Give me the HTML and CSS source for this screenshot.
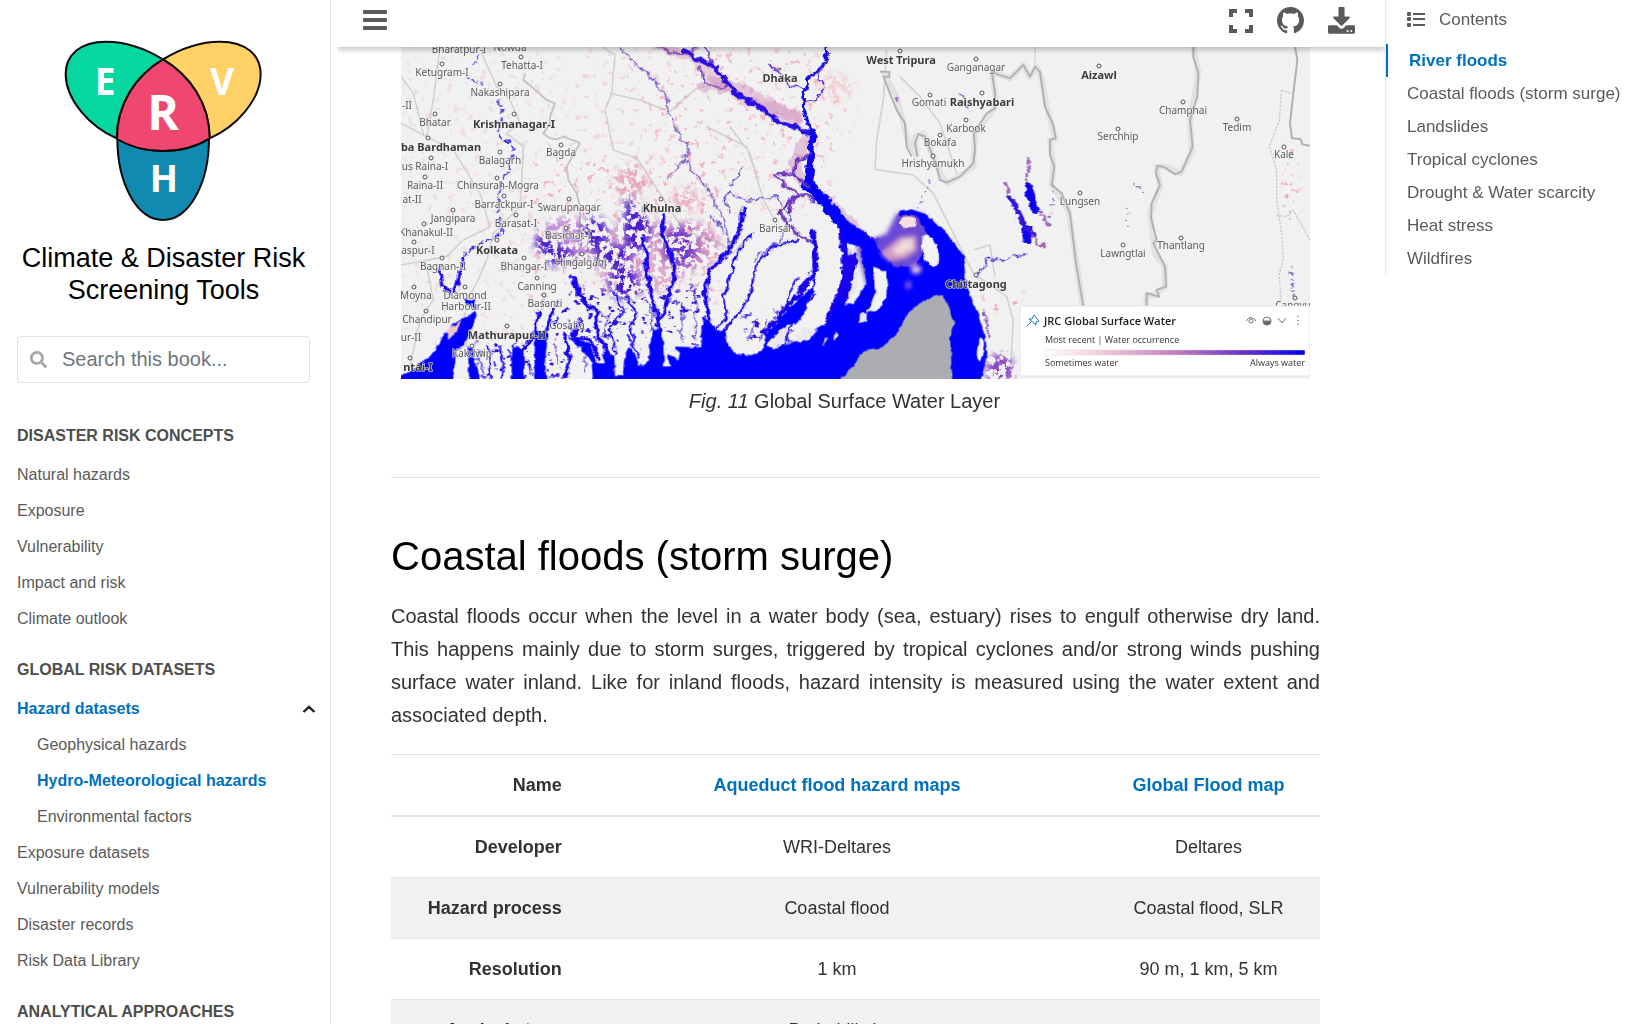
FILE: index.html
```html
<!DOCTYPE html>
<html lang="en">
<head>
<meta charset="utf-8">
<meta name="viewport" content="width=device-width, initial-scale=1">
<title>Hydro-Meteorological hazards</title>
<link rel="stylesheet" href="styles.css">
</head>
<body>
<div class="layout">
  <aside class="sidebar">
    <div class="brand">
      <svg class="logo" viewBox="64 39 200 184" role="img" aria-label="Risk logo">
        <g transform="scale(.33333)" stroke="#0a0a0a" stroke-width="6" stroke-linejoin="round">
          <path fill="#06d6a0" d="M489 178C430 142 370 125 318 125C240 125 197 165 197 222C197 300 270 380 350 415C350 310 410 225 489 178Z"/>
          <path fill="#ffd166" d="M489 178C548 142 608 125 660 125C738 125 782 165 782 222C782 300 708 380 629 415C629 310 568 225 489 178Z"/>
          <path fill="#118ab2" d="M352 415C352 550 410 660 489 660C568 660 627 550 627 415C550 465 430 465 352 415Z"/>
          <path fill="#ef476f" d="M489 178C410 225 350 310 351 417C430 465 550 465 629 415C629 310 568 225 489 178Z"/>
        </g>
        <g class="logo-letters">
          <text x="105" y="95">E</text>
          <text x="222" y="95">V</text>
          <text class="logo-main" x="163" y="130">R</text>
          <text x="164" y="192">H</text>
        </g>
      </svg>
      <h1 class="site-title">Climate &amp; Disaster Risk Screening Tools</h1>
      <form class="search">
        <svg class="search-icon" viewBox="0 0 512 512" aria-hidden="true"><path fill="currentColor" d="M505 442.700L405.300 343c-4.500-4.500-10.600-7-17-7H372c27.600-35.300 44-79.700 44-128C416 93.100 322.900 0 208 0S0 93.100 0 208s93.100 208 208 208c48.300 0 92.700-16.400 128-44v16.300c0 6.400 2.500 12.500 7 17l99.700 99.700c9.400 9.400 24.600 9.400 33.900 0l28.300-28.300c9.400-9.400 9.400-24.600.1-34zM208 336c-70.700 0-128-57.200-128-128 0-70.700 57.200-128 128-128 70.700 0 128 57.200 128 128 0 70.700-57.200 128-128 128z"/></svg>
        <input class="search-input" type="search" placeholder="Search this book..." aria-label="Search this book">
      </form>
    </div>
    <nav class="book-nav" aria-label="Book">
      <h2 class="part">DISASTER RISK CONCEPTS</h2>
      <ul class="pages">
        <li><a href="#">Natural hazards</a></li>
        <li><a href="#">Exposure</a></li>
        <li><a href="#">Vulnerability</a></li>
        <li><a href="#">Impact and risk</a></li>
        <li><a href="#">Climate outlook</a></li>
      </ul>
      <h2 class="part">GLOBAL RISK DATASETS</h2>
      <ul class="pages">
        <li>
          <div class="branch">
            <a class="current" href="#">Hazard datasets</a>
            <button class="toggle" type="button" aria-label="Collapse Hazard datasets"><svg viewBox="0 0 14 8" aria-hidden="true"><path d="M1.500 7L7 1.800L12.500 7" fill="none" stroke="currentColor" stroke-width="2.400"/></svg></button>
          </div>
          <ul class="pages nested">
            <li><a href="#">Geophysical hazards</a></li>
            <li><a class="current" href="#">Hydro-Meteorological hazards</a></li>
            <li><a href="#">Environmental factors</a></li>
          </ul>
        </li>
        <li><a href="#">Exposure datasets</a></li>
        <li><a href="#">Vulnerability models</a></li>
        <li><a href="#">Disaster records</a></li>
        <li><a href="#">Risk Data Library</a></li>
      </ul>
      <h2 class="part">ANALYTICAL APPROACHES</h2>
    </nav>
  </aside>

  <main class="main">
    <header class="topbar">
      <button class="icon-button" type="button" aria-label="Toggle sidebar"><svg viewBox="0 0 24 24" aria-hidden="true"><g fill="currentColor"><rect y="1" width="24" height="4" rx="1"/><rect y="9" width="24" height="4" rx="1"/><rect y="17" width="24" height="4" rx="1"/></g></svg></button>
      <div class="actions">
        <button class="icon-button" type="button" aria-label="Fullscreen"><svg viewBox="0 0 24 24" aria-hidden="true"><path d="M2 8V2H8M16 2H22V8M22 16V22H16M8 22H2V16" fill="none" stroke="currentColor" stroke-width="4"/></svg></button>
        <a class="icon-button" href="#" aria-label="Source repository"><svg class="wide" viewBox="0 0 16 16" aria-hidden="true"><path fill="currentColor" d="M8 0C3.580 0 0 3.580 0 8c0 3.540 2.290 6.530 5.470 7.590.4.070.55-.170.55-.380 0-.190-.010-.820-.010-1.490-2.010.370-2.530-.490-2.690-.940-.090-.230-.480-.940-.820-1.130-.280-.150-.680-.520-.010-.530.630-.010 1.080.580 1.230.820.720 1.210 1.870.870 2.330.660.070-.520.280-.870.510-1.070-1.780-.200-3.640-.890-3.640-3.950 0-.870.310-1.590.820-2.150-.080-.200-.360-1.020.080-2.120 0 0 .670-.210 2.200.820.640-.180 1.320-.270 2-.270s1.360.090 2 .270c1.530-1.040 2.200-.820 2.200-.820.440 1.100.160 1.920.080 2.120.510.560.820 1.270.820 2.150 0 3.070-1.870 3.750-3.650 3.950.290.250.540.730.540 1.480 0 1.070-.010 1.930-.010 2.200 0 .210.150.460.550.380A8.010 8.010 0 0 0 16 8c0-4.420-3.580-8-8-8z"/></svg></a>
        <button class="icon-button" type="button" aria-label="Download"><svg class="wide" viewBox="0 0 80 80" aria-hidden="true"><g fill="currentColor"><path d="M33 0H47Q49 0 49 2V28H62Q67 29 64 33L43 54Q40 57 37 54L16 33Q13 29 18 28H31V2Q31 0 33 0Z"/><path d="M4 54H26L34 62Q40 67 46 62L54 54H76Q80 54 80 58V75Q80 79 76 79H4Q0 79 0 75V58Q0 54 4 54ZM58 68a3 3 0 1 0 0 6a3 3 0 0 0 0-6ZM69 68a3 3 0 1 0 0 6a3 3 0 0 0 0-6Z" fill-rule="evenodd"/></g></svg></button>
      </div>
    </header>

    <article class="content">
      <figure class="figure">
        <svg class="map" viewBox="401 47 909 332" role="img" aria-label="Map of surface water in the Ganges delta">
          <defs>
            <filter id="rough" x="-5%" y="-5%" width="110%" height="110%"><feTurbulence type="fractalNoise" baseFrequency=".04" numOctaves="3" seed="4"/><feDisplacementMap in="SourceGraphic" scale="26" xChannelSelector="R" yChannelSelector="G"/></filter>
            <filter id="coast" x="-5%" y="-5%" width="110%" height="110%"><feTurbulence type="fractalNoise" baseFrequency=".05" numOctaves="2" seed="9"/><feDisplacementMap in="SourceGraphic" scale="14" xChannelSelector="R" yChannelSelector="G"/></filter>
            <filter id="dense" x="-10%" y="-10%" width="120%" height="120%"><feGaussianBlur in="SourceGraphic" stdDeviation="12" result="b"/><feTurbulence type="fractalNoise" baseFrequency=".055" numOctaves="5" seed="3"/><feColorMatrix values="0 0 0 0 0  0 0 0 0 0  0 0 0 0 0  9 0 0 0 -4"/><feComposite in="b" operator="in"/></filter>
            <filter id="sparse" x="-10%" y="-10%" width="120%" height="120%"><feGaussianBlur in="SourceGraphic" stdDeviation="10" result="b"/><feTurbulence type="fractalNoise" baseFrequency=".05" numOctaves="4" seed="12"/><feColorMatrix values="0 0 0 0 0  0 0 0 0 0  0 0 0 0 0  14 0 0 0 -9"/><feComposite in="b" operator="in"/></filter>
            <filter id="soft" x="-20%" y="-20%" width="140%" height="140%"><feGaussianBlur stdDeviation="7"/></filter>
            <linearGradient id="ramp"><stop offset="0" stop-color="#fff"/><stop offset=".15" stop-color="#fbdde2"/><stop offset=".5" stop-color="#c480bb"/><stop offset=".75" stop-color="#6a35c8"/><stop offset="1" stop-color="#0000f5"/></linearGradient>
          </defs>
          <rect x="401" y="47" width="909" height="332" fill="#f1f1f1"/>
          <g transform="scale(.33333)">
            <!-- district and state borders -->
            <g fill="none" stroke="#d3d3d3" stroke-width="5" stroke-linejoin="round">
              <path d="M1320 140L1300 300L1280 410L1203 370M1280 410L1360 450L1440 580L1470 680L1390 720L1340 770L1203 795M1203 230L1240 280L1270 400M1445 160L1490 260L1530 300L1560 370L1520 400L1570 440L1565 540L1560 620L1480 700L1460 780L1430 850L1400 900L1390 1000L1430 1137M1230 1100L1260 960L1300 900L1280 800"/>
              <path d="M1790 130L1845 165L1835 280L1815 330L1840 450L1910 475L1960 550L2050 690L2160 730L2200 760L2250 700M1830 280L1920 300L2010 335L2060 290L2090 265L2180 245M2190 380L2250 460L2290 600L2330 670M2120 380L2240 440L2260 500M2660 150L2650 300L2630 420L2625 508L2740 525L2800 580L2860 700L2920 820L3020 890L3040 960L3030 1137M2920 750L2970 735L2985 830M2700 230L2760 290L2820 370L2870 520"/>
            </g>
            <g fill="none" stroke="#e2e2e2" stroke-width="18" stroke-linejoin="round">
              <path d="M2650 215L2690 290L2720 410L2750 470M2750 470L2745 410L2770 400L2820 520L2845 550L2920 500L2925 400L2980 330L2990 310L2975 215L3030 235L3070 195L3090 230L3110 200L3125 235L3140 320L3165 415L3150 420L3160 500L3155 555L3205 630L3230 790L3250 930M3580 140L3595 220L3570 360L3575 460L3540 520L3500 500L3470 500L3480 560L3450 640L3465 760L3495 800L3495 860L3460 885L3440 885L3440 920"/>
            </g>
            <g fill="none" stroke="#b2b2b2" stroke-width="6" stroke-linejoin="round">
              <path d="M2640 215H2668V230H2650L2690 330L2715 370L2720 440L2735 470M2752 470L2745 430L2755 402L2775 410L2810 500L2820 540L2840 548L2880 530L2920 490L2925 450L2922 400L2960 340L2985 325L2985 280L2975 210M2985 220L3030 235L3070 195L3090 230L3105 200L3120 215L3135 320L3160 375L3167 415L3150 420L3150 465L3163 500L3155 555L3185 580L3210 640L3228 790L3250 920M3580 140L3580 170L3595 220L3592 290L3570 360L3578 440L3545 515L3525 523L3490 500L3472 498L3468 520L3480 555L3455 610L3453 655L3470 720L3460 730L3495 800L3498 860L3470 870L3478 890L3440 880V920M3885 140L3892 180L3880 280L3870 370L3876 415L3902 418L3907 433L3930 437"/>
              <path d="M1575 220L1570 240L1595 260L1640 300L1665 310L1650 350V370L1630 400L1650 415L1670 418L1690 410L1730 425L1740 430L1700 500L1705 540L1730 580L1740 620L1740 680L1750 720" stroke="#c6c6c6"/>
              <path d="M3105 140V190M3845 270L3870 280M3845 270L3838 360L3808 440L3830 510L3830 600L3845 700L3850 780L3838 820L3842 900M3830 645L3860 650L3880 630L3930 720" stroke="#c9c9c9" stroke-width="4" stroke-dasharray="7 4"/>
            </g>
            <!-- seasonal water -->
            <g filter="url(#sparse)" fill="#f2a7b4">
              <rect x="1210" y="150" width="500" height="880" opacity=".25"/><rect x="1700" y="150" width="800" height="500" opacity=".35"/><rect x="1600" y="480" width="560" height="430" opacity=".7"/><ellipse cx="2250" cy="330" rx="320" ry="190" opacity=".5"/><ellipse cx="3870" cy="560" rx="26" ry="130"/><rect x="2950" y="870" width="120" height="70"/>
            </g>
            <g filter="url(#dense)">
              <ellipse cx="1890" cy="550" rx="50" ry="55" fill="#e28fae" opacity=".7"/><ellipse cx="2060" cy="600" rx="50" ry="35" fill="#e28fae" opacity=".6"/><ellipse cx="1700" cy="720" rx="95" ry="70" fill="#b070cc" opacity=".7"/>
              <ellipse cx="1930" cy="770" rx="150" ry="115" fill="#d282b8" opacity=".6"/><ellipse cx="2070" cy="740" rx="90" ry="75" fill="#c56cb4" opacity=".7"/><ellipse cx="2500" cy="260" rx="60" ry="40" fill="#f2a7b4" opacity=".4"/>
            </g>
            <g filter="url(#dense)" fill="#4a1fcf">
              <ellipse cx="1785" cy="700" rx="38" ry="50"/><ellipse cx="1910" cy="690" rx="42" ry="65"/><ellipse cx="1675" cy="765" rx="45" ry="30"/><ellipse cx="1840" cy="770" rx="55" ry="35"/><ellipse cx="1870" cy="850" rx="45" ry="50"/><ellipse cx="2040" cy="740" rx="50" ry="60" opacity=".7"/><ellipse cx="1890" cy="630" rx="20" ry="35"/><ellipse cx="1635" cy="730" rx="30" ry="25"/>
            </g>
            <!-- Padma and Meghna -->
            <g filter="url(#rough)" fill="none" stroke-linecap="round" stroke-linejoin="round">
              <path d="M1960 130L2080 175L2160 250L2240 305L2400 350" stroke="#dba0bd" stroke-width="28" opacity=".45"/>
              <path d="M2125 245Q2100 270 2130 250L2230 270L2390 360M2420 420Q2350 510 2430 560L2520 640L2600 720L2740 760" stroke="#c983b6" stroke-width="36" opacity=".4"/>
              <path d="M1960 128Q2050 190 2110 130M2110 130L2145 210Q2200 260 2160 265L2110 250L2100 200" stroke="#8a4fc0" stroke-width="7"/>
              <path d="M2050 150L2090 175L2150 205L2200 275L2260 310L2340 365L2435 400" stroke="#2a0ee0" stroke-width="14"/>
              <path d="M2480 130L2475 190L2425 235L2412 280L2415 340L2440 410" stroke="#1208e8" stroke-width="10"/>
              <path d="M2480 180L2455 220L2470 260L2450 300L2420 305M2420 265L2370 260L2340 220L2300 190" stroke="#5630c8" stroke-width="5"/>
              <path d="M2438 390L2432 470L2425 560" stroke="#0a00f0" stroke-width="20"/>
              <path d="M2425 555L2480 610L2540 690L2640 740L2730 800" stroke="#0000f8" stroke-width="36"/>
              <path d="M2430 460Q2350 500 2400 540M2330 520L2380 525L2430 560M2370 640Q2370 560 2440 600M2320 525L2390 580L2340 640L2390 700L2445 735" stroke="#6a35bd" stroke-width="8"/>
            </g>
            <!-- delta channels -->
            <g filter="url(#rough)" fill="none" stroke="#1505ee" stroke-linecap="round" stroke-linejoin="round">
              <path d="M1497 300L1510 350L1490 400L1530 430L1545 450L1530 500L1500 560L1495 640L1505 700L1440 730L1395 765L1380 800" stroke="#3a25d8" stroke-width="5" stroke-dasharray="16 12"/>
              <path d="M1320 800L1325 860L1360 880L1375 850L1385 780" stroke-width="9"/>
              <path d="M1420 190L1440 165L1460 150M1400 235L1455 255" stroke-width="5" stroke-dasharray="10 10" opacity=".6"/>
              <path d="M1860 145L1900 190L1960 235L2000 290L2005 340L2045 420L2070 440L2050 480L2000 540M2050 480L2120 560L2170 660L2190 740" stroke="#6a48bd" stroke-width="5" stroke-dasharray="14 7"/>
              <path d="M1715 830L1740 890L1785 930L1790 1000L1830 1070" stroke-width="12"/><path d="M1930 720L1945 840L1975 960V1040M1990 650L1985 700L2025 790L2015 860L1980 960" stroke-width="11"/>
              <path d="M2230 630L2215 700L2180 760L2130 810L2115 880L2125 940L2130 1020" stroke-width="12"/>
              <path d="M2260 700L2210 760L2190 830L2170 900L2180 950L2150 990M2390 720L2320 740L2265 800L2255 870L2230 925L2180 980L2170 1010" stroke-width="7"/>
              <path d="M1620 930L1605 1000L1560 1060M1650 960L1620 1040L1610 1130M1690 1000L1710 1070L1695 1130M1660 930L1640 970M1740 960L1720 1010L1770 1020L1800 1080" stroke-width="10"/>
              <path d="M1880 890L1910 940L1890 980L1910 1070M1840 870L1870 930L1830 980L1845 1060M1550 1040V1130M1500 1040L1510 1130M1465 1040L1470 1130M2440 720V880L2390 930L2350 1040M2385 960L2360 900L2390 830" stroke-width="6"/>
              <path d="M1790 930L1820 960L1810 1010M1935 900L1960 940L1950 1000M2030 900L2050 950L2040 1020M2070 850L2090 920L2080 1020M1660 1030L1675 1090M1750 1050L1760 1120M1585 1080L1600 1130M1440 1050L1450 1130M2300 960L2280 1020M2270 970L2240 1020" stroke="#4326c5" stroke-width="4" stroke-dasharray="12 6"/>
              <path d="M2170 600L2190 580L2240 600L2330 590M2130 640L2170 700M2190 560L2230 500M2190 640L2170 590M2330 590L2370 650L2340 720L2260 780" stroke="#4326c5" stroke-width="4" stroke-dasharray="12 6"/>
              <path d="M2440 700L2450 800L2400 880L2290 1000" stroke-width="15"/>
              <path d="M2530 700L2540 830L2490 960M2620 790L2630 870L2590 930M2560 770L2530 900" stroke-width="24"/>
              <path d="M2928 828L2955 800L2955 775L3020 780L3080 755" stroke="#3a25d8" stroke-width="5" stroke-dasharray="14 8"/>
            </g>
            <g filter="url(#sparse)" fill="#2a10e0"><rect x="1430" y="1010" width="280" height="127"/><rect x="1640" y="870" width="480" height="170"/><rect x="2230" y="930" width="150" height="100"/></g>
            <!-- Bay of Bengal -->
            <g filter="url(#soft)"><path fill="#6a48d6" d="M2570 740L2660 700L2690 640L2770 640L2810 760L2780 880L2600 860Z"/></g>
            <g filter="url(#coast)">
              <path fill="#0000ff" d="M1190 1137L1243 1105L1293 1065L1333 1005L1363 970L1428 932L1433 950L1408 1000L1398 1025L1368 1060L1358 1150H1190Z"/>
              <path fill="#0000ff" d="M1390 895L1425 900L1430 925L1400 915ZM1403 1035L1418 1045L1428 1100L1443 1150H1408ZM1535 1035L1570 1050L1575 1150H1535ZM1605 990L1645 1000L1635 1080L1640 1150H1603Z"/>
              <path fill="#0000ff" d="M1700 1005L1770 1030L1790 1090L1815 1090L1805 1060L1843 1070L1845 1125L1868 1125L1875 1060L1890 1045L1905 1060L1918 1100L1948 1080L1950 1030L1960 990L1985 990L1990 1040L1992 1100L2010 1098L2000 1065L2035 1078L2040 1060L2025 1040L2100 1042L2110 950L2145 980L2150 995L2175 990L2180 1030L2210 1060L2250 1065L2285 1055L2300 1000L2360 930L2430 865L2445 870L2400 960L2340 990L2300 1035L2315 1045L2375 1030L2490 960L2520 900L2560 910L2600 850L2580 740L2540 730L2500 640L2540 660L2620 720L2680 800L2745 800L2790 720L2760 660L2720 645L2690 650L2700 635L2735 628L2770 640L2800 660L2850 710L2890 770L2900 860L2930 930L2955 1010L2962 1060L2940 1150H1780L1775 1090L1740 1040Z"/>
              <path fill="#f1f1f1" d="M2620 800L2658 815L2665 860L2650 920L2600 940L2625 880Z"/>
              <path fill="#f1f1f1" d="M2940 1010Q2952 1010 2952 1040L2942 1085Q2920 1080 2940 1010Z"/>
              <path fill="#e9e6f0" d="M2500 1020L2505 990L2515 1010ZM2470 1035L2475 1010L2485 1012ZM2370 1030L2400 1010L2410 980L2450 990L2430 1020ZM2310 1040L2335 1000L2370 970L2350 1030ZM2580 940H2600V965H2578ZM2535 920L2555 860L2570 800L2575 860Z"/>
              <path fill="#acacb3" d="M2510 1150L2560 1100L2590 1055L2640 1045L2690 1000L2730 930L2790 892L2825 885L2850 920L2862 970L2850 1010L2857 1150Z"/>
              <path fill="#ecc4cc" d="M1340 990L1385 960L1365 1000L1345 1020Z"/>
            </g>
            <g filter="url(#soft)"><path fill="#cf9bc4" d="M2640 760L2700 710L2748 706L2752 750L2720 775L2670 785Z"/><path fill="#efd8de" d="M2675 755L2710 718L2738 716L2740 745L2700 765Z"/><ellipse cx="2748" cy="808" rx="16" ry="14" fill="#dcbcdb"/><ellipse cx="2725" cy="855" rx="9" ry="12" fill="#8c64dc"/></g>
            <g filter="url(#coast)"><ellipse cx="2725" cy="667" rx="28" ry="21" fill="#f4dfe3" stroke="#7a48c0" stroke-width="6"/><ellipse cx="2790" cy="752" rx="24" ry="50" fill="#f3f3f5" transform="rotate(-18 2790 752)"/></g>
            <!-- Kaptai lake and the eastern streams -->
            <g filter="url(#rough)" fill="none" stroke-linecap="round">
              <path d="M3085 480V540L3105 620M3015 550L3060 650L3085 700L3130 740M3110 620L3150 680" stroke="#a06bb8" stroke-width="11" stroke-dasharray="6 14"/>
              <path d="M3085 560L3105 630M3085 690L3080 720" stroke="#0d04f0" stroke-width="24"/><path d="M3030 590L3075 680L3100 700" stroke="#2f14dc" stroke-width="13"/>
              <path d="M3160 560L3150 650L3120 660M3405 550L3440 590M3380 620L3388 690M3875 800L3880 900L3870 810M2790 540L2750 640" stroke="#7058c8" stroke-width="4" stroke-dasharray="4 14"/>
              <path d="M2880 280L2900 320M2690 290V310M2950 930L2965 1010" stroke="#8a4fc0" stroke-width="6" stroke-dasharray="5 6"/>
            </g>
            <g filter="url(#dense)" fill="#8a3fc0"><ellipse cx="3000" cy="1110" rx="42" ry="50"/></g>
          </g>
          <!-- settlement markers -->
          <g class="markers">
            <circle cx="442" cy="64" r="2"/><circle cx="521" cy="57" r="2"/><circle cx="500" cy="84" r="2"/><circle cx="435" cy="114" r="2"/><circle cx="514" cy="114" r="2"/><circle cx="428" cy="138" r="2"/><circle cx="500" cy="152" r="2"/><circle cx="561" cy="145" r="2"/><circle cx="431" cy="158" r="2"/><circle cx="425" cy="177" r="2"/><circle cx="497" cy="178" r="2"/><circle cx="504" cy="196" r="2"/><circle cx="453" cy="210" r="2"/><circle cx="516" cy="215" r="2"/><circle cx="569" cy="199" r="2"/><circle cx="424" cy="224" r="2"/><circle cx="414" cy="242" r="2"/><circle cx="497" cy="240" r="2"/><circle cx="566" cy="228" r="2"/><circle cx="442" cy="258" r="2"/><circle cx="524" cy="258" r="2"/><circle cx="582" cy="254" r="2"/><circle cx="414" cy="287" r="2"/><circle cx="465" cy="287" r="2"/><circle cx="537" cy="278" r="2"/><circle cx="544" cy="295" r="2"/><circle cx="426" cy="311" r="2"/><circle cx="507" cy="326" r="2"/><circle cx="472" cy="346" r="2"/><circle cx="410" cy="358" r="2"/><circle cx="661" cy="199" r="2"/>
            <circle cx="780" cy="69" r="1"/><circle cx="900" cy="51" r="2"/><circle cx="976" cy="59" r="2"/><circle cx="930" cy="95" r="2"/><circle cx="982" cy="93" r="2"/><circle cx="966" cy="120" r="2"/><circle cx="940" cy="135" r="2"/><circle cx="933" cy="156" r="2"/><circle cx="775" cy="220" r="2"/><circle cx="976" cy="275" r="2"/><circle cx="1099" cy="66" r="2"/><circle cx="1183" cy="102" r="2"/><circle cx="1118" cy="129" r="2"/><circle cx="1237" cy="119" r="2"/><circle cx="1284" cy="147" r="2"/><circle cx="1080" cy="193" r="2"/><circle cx="1123" cy="245" r="2"/><circle cx="1181" cy="238" r="2"/><circle cx="1295" cy="298" r="2"/>
          </g>
          <g class="places">
            <text x="459" y="53">Bharatpur-I</text><text x="510" y="51">Nowda</text><text x="442" y="76">Ketugram-I</text><text x="522" y="69">Tehatta-I</text><text x="500" y="96">Nakashipara</text><text x="407" y="109">-II</text><text x="435" y="126">Bhatar</text><text x="561" y="156">Bagda</text><text x="500" y="164">Balagarh</text><text x="425" y="170">us Raina-I</text><text x="425" y="189">Raina-II</text><text x="498" y="189">Chinsurah-Mogra</text><text x="412" y="203">at-II</text><text x="504" y="208">Barrackpur-I</text><text x="569" y="211">Swarupnagar</text><text x="453" y="222">Jangipara</text><text x="516" y="227">Barasat-I</text><text x="426" y="236">Khanakul-II</text><text x="568" y="239">Basirhat-I</text><text x="418" y="254">aspur-I</text><text x="443" y="270">Bagnan-II</text><text x="524" y="270">Bhangar-I</text><text x="581" y="266">Hingalganj</text><text x="537" y="290">Canning</text><text x="416" y="299">Moyna</text><text x="465" y="299">Diamond</text><text x="466" y="310">Harbour-II</text><text x="545" y="307">Basanti</text><text x="427" y="323">Chandipur</text><text x="411" y="341">ur-II</text><text x="567" y="329">Gosaba</text><text x="472" y="357">Kakdwip</text><text x="775" y="232">Barisal</text><text x="976" y="71">Ganganagar</text><text x="929" y="106">Gomati</text><text x="966" y="132">Karbook</text><text x="940" y="146">Bokafa</text><text x="933" y="167">Hrishyamukh</text><text x="1183" y="114">Champhai</text><text x="1118" y="140">Serchhip</text><text x="1237" y="131">Tedim</text><text x="1284" y="158">Kale</text><text x="1080" y="205">Lungsen</text><text x="1123" y="257">Lawngtlai</text><text x="1181" y="249">Thantlang</text><text x="1293" y="309">Cangyu</text>
            <g class="town"><text x="514" y="128">Krishnanagar-I</text><text x="441" y="151">ba Bardhaman</text><text x="497" y="254">Kolkata</text><text x="507" y="339">Mathurapur-II</text><text x="418" y="371">ntai-I</text><text x="662" y="212">Khulna</text><text x="780" y="82">Dhaka</text><text x="901" y="64">West Tripura</text><text x="982" y="106">Raishyabari</text><text x="976" y="288">Chittagong</text><text x="1099" y="79">Aizawl</text></g>
          </g>
          <!-- legend -->
          <g class="legend">
            <rect x="1020" y="306" width="290" height="70" fill="#fff" stroke="#e3e3e3"/>
            <path d="M1034 315L1039 321L1036 322L1036 325L1029 319L1032 319ZM1031 322L1027 326" fill="none" stroke="#1673b4"/>
            <text class="legend-title" x="1044" y="325">JRC Global Surface Water</text>
            <text x="1045" y="343">Most recent | Water occurrence</text>
            <rect x="1045" y="350" width="260" height="5" rx="1" fill="url(#ramp)" stroke="#d9d2da" stroke-width=".5"/>
            <text x="1045" y="366">Sometimes water</text>
            <text class="end" x="1305" y="366">Always water</text>
            <g fill="none" stroke="#777"><path d="M1246 321Q1251 314 1256 321"/><circle cx="1251" cy="321" r="2"/><circle cx="1267" cy="321" r="4"/><path d="M1263 321H1271A4 4 0 0 1 1263 321Z" fill="#666"/><path d="M1278 318L1282 323L1286 318"/><path d="M1298 316V326" stroke-dasharray="1 3" stroke-width="1.500"/></g>
          </g>
        </svg>
        <figcaption class="caption"><em>Fig. 11</em> Global Surface Water Layer</figcaption>
      </figure>
      <hr class="rule">
      <h2 class="section-title">Coastal floods (storm surge)</h2>
      <p class="lead">Coastal floods occur when the level in a water body (sea, estuary) rises to engulf otherwise dry land. This happens mainly due to storm surges, triggered by tropical cyclones and/or strong winds pushing surface water inland. Like for inland floods, hazard intensity is measured using the water extent and associated depth.</p>
      <table class="datasets">
        <colgroup><col class="col-name"><col class="col-first"><col class="col-second"></colgroup>
        <thead><tr><th scope="col">Name</th><th scope="col"><a href="#">Aqueduct flood hazard maps</a></th><th scope="col"><a href="#">Global Flood map</a></th></tr></thead>
        <tbody>
          <tr><th scope="row">Developer</th><td>WRI-Deltares</td><td>Deltares</td></tr>
          <tr><th scope="row">Hazard process</th><td>Coastal flood</td><td>Coastal flood, SLR</td></tr>
          <tr><th scope="row">Resolution</th><td>1 km</td><td>90 m, 1 km, 5 km</td></tr>
          <tr><th scope="row">Analysis type</th><td>Probabilistic</td><td></td></tr>
        </tbody>
      </table>
    </article>
  </main>

  <nav class="toc" aria-label="Contents">
    <div class="toc-title"><svg viewBox="0 0 18 16" aria-hidden="true"><g fill="currentColor"><rect width="4" height="4" rx="1"/><rect y="5" width="4" height="4" rx="1"/><rect y="11" width="4" height="4" rx="1"/><rect x="6" y="1" width="12" height="2"/><rect x="6" y="6" width="12" height="2"/><rect x="6" y="12" width="12" height="2"/></g></svg>Contents</div>
    <ul>
      <li><a class="active" href="#">River floods</a></li>
      <li><a href="#">Coastal floods (storm surge)</a></li>
      <li><a href="#">Landslides</a></li>
      <li><a href="#">Tropical cyclones</a></li>
      <li><a href="#">Drought &amp; Water scarcity</a></li>
      <li><a href="#">Heat stress</a></li>
      <li><a href="#">Wildfires</a></li>
    </ul>
  </nav>
</div>
</body>
</html>
```
FILE: styles.css
```css
* { box-sizing: border-box; }

body {
  margin: 0;
  background: #fff;
  color: #323232;
  font-family: "Liberation Sans", Arial, sans-serif;
  font-size: 20px;
  line-height: 33px;
}

ul { list-style: none; margin: 0; padding: 0; }
a { color: inherit; text-decoration: none; }
button { border: 0; padding: 0; background: none; color: inherit; cursor: pointer; }

.layout {
  display: grid;
  grid-template-columns: 331px minmax(0, 1fr) 251px;
  align-items: start;
  height: 100vh;
  overflow: hidden;
}

/* left navigation */
.sidebar {
  height: 100vh;
  overflow: hidden;
  border-right: 1px solid #dee2e6;
}
.brand { padding: 39px 20px 0 17px; text-align: center; }
.logo { display: block; width: 200px; height: 184px; margin: 0 auto; }
.logo-letters {
  fill: #fff;
  font-family: "Open Sans", "Noto Sans", sans-serif;
  font-size: 37px;
  font-weight: 700;
  text-anchor: middle;
}
.logo-main { font-size: 48px; }
.site-title {
  margin: 19px 0 30px;
  color: #000;
  font-size: 27px;
  font-weight: 400;
  line-height: 32px;
}
.search { position: relative; }
.search-icon {
  position: absolute;
  left: 13px;
  top: 15px;
  width: 17px;
  height: 17px;
  color: #a4a6a9;
}
.search-input {
  display: block;
  width: 100%;
  height: 47px;
  padding: 0 12px 0 44px;
  border: 1px solid #dee2e6;
  border-radius: 4px;
  background: #fff;
  font: inherit;
  outline: 0;
}
.search-input::placeholder { color: #6c757d; opacity: 1; }

.book-nav {
  padding: 20px 14px 0 17px;
  color: #5a5a5a;
  font-size: 16px;
  line-height: 24px;
}
.part {
  margin: 21px 0 9px;
  color: #4d4d4d;
  font-size: 16px;
  font-weight: 700;
  line-height: 24px;
}
.pages a { display: block; padding: 6px 0; }
.pages .current { color: #0071bc; font-weight: 700; }
.nested { padding-left: 20px; }
.branch { display: flex; justify-content: space-between; align-items: center; }
.toggle { width: 14px; color: #222; }
.toggle svg { display: block; width: 14px; height: 8px; }

/* top bar */
.topbar {
  position: relative;
  z-index: 1;
  display: flex;
  justify-content: space-between;
  height: 47px;
  margin-left: 6px;
  padding: 7px 30px 0 26px;
  background: #fff;
  box-shadow: 0 3px 5px rgba(0, 0, 0, .22);
  clip-path: inset(0 0 -10px 0);
  color: #5a5a5a;
}
.actions { display: flex; gap: 24px; }
.icon-button { display: flex; align-items: center; height: 27px; }
.icon-button svg { display: block; width: 24px; height: 24px; }
.icon-button .wide { width: 27px; height: 27px; }

/* article */
.content { padding: 0 65px 0 60px; }
.figure { margin: 0; padding: 0 10px; }
.map { display: block; width: 100%; }
.markers { fill: #f5f5f5; stroke: #555; stroke-width: 1px; }
.places {
  fill: #5c5c5c;
  stroke: #f3f3f3;
  stroke-width: 1px;
  paint-order: stroke;
  font-family: "Noto Sans", sans-serif;
  font-size: 10px;
  text-anchor: middle;
}
.town { fill: #3c3c3c; font-size: 11px; font-weight: 700; }
.legend { fill: #333; font-family: "Open Sans", "Noto Sans", sans-serif; font-size: 9px; }
.legend-title { fill: #1d1d1d; font-size: 11px; font-weight: 600; }
.end { text-anchor: end; }
.caption { padding: 6px 22px 0 0; text-align: center; }
.rule { margin: 59px 0 55px; border: 0; border-top: 1px solid #dfe1e3; }
.section-title {
  margin: 0 0 21px;
  color: #000;
  font-size: 40px;
  font-weight: 400;
  line-height: 46px;
}
.lead { margin: 0 0 22px; text-align: justify; }

.datasets {
  width: 100%;
  table-layout: fixed;
  border-collapse: collapse;
  font-size: 18px;
  line-height: 30px;
}
.col-name { width: 20%; }
.col-first { width: 56%; }
.col-second { width: 24%; }
.datasets th, .datasets td {
  height: 60px;
  padding: 15px;
  border-top: 1px solid #dee2e6;
  text-align: center;
}
.datasets th:first-child { text-align: right; }
.datasets thead th { border-bottom: 2px solid #dee2e6; }
.datasets a { color: #0071bc; }
.datasets tbody tr:nth-child(even) { background: #f1f1f1; }

/* page contents */
.toc {
  padding-top: 3px;
  border-left: 1px solid #e6e8ea;
  color: #5a5a5a;
  font-size: 17px;
}
.toc-title { display: flex; align-items: center; gap: 14px; padding: 0 0 8px 21px; }
.toc-title svg { width: 18px; height: 16px; }
.toc a { display: block; padding-left: 21px; white-space: nowrap; }
.toc .active { border-left: 2px solid #0071bc; color: #0071bc; font-weight: 700; }
```
